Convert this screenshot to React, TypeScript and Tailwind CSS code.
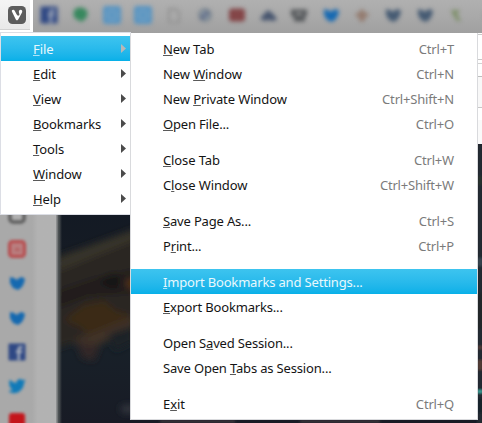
import React from "react";

type Item = { label: string; key: number; shortcut?: string; active?: boolean };

const mainItems: Item[] = [
  { label: "File", key: 0, active: true },
  { label: "Edit", key: 0 },
  { label: "View", key: 0 },
  { label: "Bookmarks", key: 0 },
  { label: "Tools", key: 0 },
  { label: "Window", key: 0 },
  { label: "Help", key: 0 },
];

const fileGroups: Item[][] = [
  [
    { label: "New Tab", key: 0, shortcut: "Ctrl+T" },
    { label: "New Window", key: 4, shortcut: "Ctrl+N" },
    { label: "New Private Window", key: 4, shortcut: "Ctrl+Shift+N" },
    { label: "Open File...", key: 0, shortcut: "Ctrl+O" },
  ],
  [
    { label: "Close Tab", key: 0, shortcut: "Ctrl+W" },
    { label: "Close Window", key: 1, shortcut: "Ctrl+Shift+W" },
  ],
  [
    { label: "Save Page As...", key: 0, shortcut: "Ctrl+S" },
    { label: "Print...", key: 1, shortcut: "Ctrl+P" },
  ],
  [
    { label: "Import Bookmarks and Settings...", key: 0, active: true },
    { label: "Export Bookmarks...", key: 0 },
  ],
  [
    { label: "Open Saved Session...", key: 6 },
    { label: "Save Open Tabs as Session...", key: 10 },
  ],
  [{ label: "Exit", key: 1, shortcut: "Ctrl+Q" }],
];

function Label({ label, index }: { label: string; index: number }) {
  return (
    <span className={`whitespace-pre ${label.endsWith("...") ? "tracking-[-0.17px]" : "tracking-[-0.11px]"}`}>
      {label.slice(0, index)}
      <span className="underline decoration-1 decoration-current/70 underline-offset-1 [text-decoration-skip-ink:none]">
        {label[index]}
      </span>
      {label.slice(index + 1)}
    </span>
  );
}

const activeRow = "bg-linear-to-b from-[#3dc4ef] to-[#06b0e8] text-[#e8f8fd]";

const BIRD =
  "M16 3.2c-.6.3-1.2.5-1.9.5.7-.4 1.2-1 1.4-1.8-.6.4-1.3.6-2 .8A3.3 3.3 0 0 0 7.800 5.700 9.400 9.400 0 0 1 1.100 2.300c-.9 1.500-.4 3.400 1 4.400-.5 0-1-.2-1.500-.4 0 1.600 1.100 3 2.700 3.300-.5.100-1 .100-1.500 0 .4 1.300 1.600 2.300 3.100 2.300A6.600 6.600 0 0 1 0 13.300c6.300 3.900 14.500-.4 14.500-8.500.6-.4 1.100-1 1.500-1.600z";

function Fb() {
  return (
    <g>
      <rect x="-.5" y="-.5" width="17" height="17" rx="1" fill="#2f4884" />
      <path d="M8.500 16V9H7V6.500h1.500V5c0-2 1-3 3-3h2v2.500H12q-1 0-1 1v1h2.500L13 9h-2v7z" fill="#a4abba" />
    </g>
  );
}

function Square({ fill }: { fill: string }) {
  return (
    <g>
      <rect x="-1" y="-1" width="18" height="18" rx="3" fill={fill} />
      <rect x="4" y="4" width="8" height="8" rx="2" fill="none" stroke="#9fb4c5" strokeWidth="1.500" opacity=".6" />
    </g>
  );
}

const Heart = ({ fill }: { fill: string }) => (
  <path d="M1 2l4 1 3 2 2-2 3-1 3 2-1 4-2 4-4 3-5-2-3-5z" fill={fill} />
);

const tabIcons: React.ReactNode[] = [
  <Fb />,
  <path d="M8 .5c4 0 7.500 2 7.500 6s-3 7-5 7v2l-3-2c-4-1-6-3-6-7s3-6 6.500-6z" fill="#37885e" />,
  <Square fill="#5794c2" />,
  <Square fill="#5794c2" />,
  <path d="M3 2h7l3 3v10H3z" fill="#a9a9a9" stroke="#8a8a8a" strokeWidth="1.500" />,
  <g>
    <circle cx="8" cy="8" r="5.500" fill="#929eaa" stroke="#74808c" strokeWidth="2.500" />
    <path d="M4 12l7-7" stroke="#54607f" strokeWidth="2.500" />
  </g>,
  <rect x="0" y="1.500" width="16" height="13" rx="3" fill="#844648" />,
  <path d="M0 12l3-4 5-5 4 3 3 3 2 4-5 1-3-1-4 1z" fill="#48566f" />,
  <path d="M0 2.500h16v6l-2 1v5H3V10L0 9zM5 6h6v2H5z" fill="#56595c" fillRule="evenodd" />,
  <Heart fill="#1669b2" />,
  <path d="M1 8l5-3 2-3 2 3 5 3-4 2-1 4H6l-1-4z" fill="#947c70" stroke="#947c70" />,
  <Heart fill="#465b73" />,
  <Heart fill="#465b73" />,
  <path d="M3 3h9l-3 4 4 7H9L5 8z" fill="#7e906a" />,
  <path d="M5 6h12v5H5z" fill="#858585" />,
];

const sideIcons: React.ReactNode[] = [
  <rect x="1" y="0" width="14" height="15" rx="3" fill="#b0b0b0" stroke="#5c5c5c" strokeWidth="3.500" />,
  <g>
    <rect x=".5" y=".5" width="15" height="15" rx="3" fill="#b97f80" stroke="#b74a4c" strokeWidth="3" />
    <path d="M5 10l3-4 4 4z" fill="#b35f60" />
  </g>,
  <Heart fill="#1569b0" />,
  <Heart fill="#1569b0" />,
  <Fb />,
  <path d={BIRD} fill="#107ab8" stroke="#107ab8" />,
  <rect x="0" y="1" width="16" height="15" rx="3" fill="#c4151b" />,
];

function Backdrop() {
  return (
    <svg className="block size-full" viewBox="58 144 424 279" preserveAspectRatio="none">
      <defs>
        <linearGradient id="night" x1="0" y1="0" x2="0" y2="1">
          <stop offset="0" stopColor="#101824" />
          <stop offset=".38" stopColor="#151b24" />
          <stop offset=".7" stopColor="#182129" />
          <stop offset="1" stopColor="#181b25" />
        </linearGradient>
        <filter id="soft" x="-20%" y="-20%" width="140%" height="140%">
          <feGaussianBlur stdDeviation="3.500" />
        </filter>
        <filter id="fine">
          <feGaussianBlur stdDeviation="1" />
        </filter>
      </defs>
      <rect x="58" y="144" width="424" height="279" fill="url(#night)" />
      <g filter="url(#soft)">
        <path d="M52 258l35-12 50-18v94l-85 28z" fill="#292724" />
        <path d="M58 259l34-13 45-17v10l-45 18-34 14z" fill="#37342c" />
        <path d="M60 290l35-12 42-9v24l-47 3-32 12z" fill="#221d1d" />
        <path d="M97 282l16-9 9 6-7 11z" fill="#171819" />
        <path d="M124 283l12-7v16z" fill="#553617" />
        <path d="M64 320l20-15 20-4 12 10 14 4-18 22-17 4-15-14z" fill="#3b2a16" />
        <path d="M72 341l62-25v10l-35 19-17 3z" fill="#413227" />
        <path d="M76 342l24 5-6 14-12-3z" fill="#302725" />
        <path d="M108 334l25-8v16l-18 9z" fill="#1b2326" />
        <ellipse cx="128" cy="409" rx="8" ry="4" fill="#353841" />
      </g>
      <g filter="url(#fine)">
        <path d="M477 144h6v280h-6z" fill="#202a33" />
        <path d="M477 176h6v9h-6z" fill="#28332e" />
        <path d="M477 258h6v8h-6z" fill="#35434d" />
        <path d="M477 293h6v36h-6z" fill="#22252b" />
        <path d="M477 346h6v3h-6zM477 360h6v10h-6z" fill="#513b36" />
        <path d="M477 390h6v3h-6z" fill="#3b9c96" />
        <path d="M478 398h5v15h-5z" fill="#18222c" />
        <path d="M160 420h75v3h-75zM300 420h80v3h-80z" fill="#393239" />
      </g>
    </svg>
  );
}

function MainMenu() {
  return (
    <div className="absolute top-8 left-0 h-[183px] w-[131px] border border-[#dcdee5] bg-white pt-[3px]">
      {mainItems.map((it) => (
        <div
          key={it.label}
          className={`flex h-[25px] items-center justify-between pr-1 pl-8 ${it.active ? activeRow : ""}`}
        >
          <Label label={it.label} index={it.key} />
          <svg
            width="5"
            height="9"
            viewBox="0 0 5 9"
            className={it.active ? "fill-[#b7b7b7]" : "fill-[#4b4b4b]"}
          >
            <path d="M0 0l5 4.500-5 4.500z" />
          </svg>
        </div>
      ))}
    </div>
  );
}

function FileMenu() {
  return (
    <div className="absolute top-[33px] left-[130px] flex h-[387px] w-[348px] flex-col gap-[11px] border border-t-0 border-[#d9dadd] bg-white pt-[3px]">
      {fileGroups.map((group, g) => (
        <div key={g}>
          {group.map((it) => (
            <div
              key={it.label}
              className={`flex h-[25px] items-center justify-between pr-[23px] pl-8 ${it.active ? activeRow : ""}`}
            >
              <Label label={it.label} index={it.key} />
              {it.shortcut && <span className="tracking-[-0.18px] text-[#7b7b7b]">{it.shortcut}</span>}
            </div>
          ))}
        </div>
      ))}
    </div>
  );
}

export default function App() {
  return (
    <div className="relative flex h-[423px] w-[482px] flex-col overflow-hidden bg-[#b1b1b1] font-['Noto_Sans',sans-serif] text-[13px] leading-[18px] text-[#141414]">
      <div className="flex h-[33px] shrink-0">
        <div className="h-[33px] w-[33px] shrink-0 bg-white">
          <div className="h-[30px] w-[30px] border-b border-[#d2d2d2] bg-linear-to-b from-[#f4f4f4] to-[#e9e9e9] pt-1.5 pl-2">
            <svg width="18" height="18" viewBox="0 0 18 18">
              <rect width="18" height="18" rx="4.500" fill="#5d5d5d" />
              <path
                d="M4 5.700c-.5-1 .1-1.900 1.200-1.900.7 0 1.100.3 1.500 1l2 3.800c.5 1 1.100 1.300 1.900 1 .7-.3 1-.9.8-1.700l-.4-1.200c-.5-1.500.2-2.900 1.500-2.900 1.500 0 2.200 1.300 1.500 2.700L10.200 13.600c-.6 1.100-1.800 1.100-2.400 0z"
                fill="#fff"
              />
            </svg>
          </div>
        </div>
        <div className="flex grow items-start gap-[15.300px] overflow-hidden bg-linear-to-b from-[#b0b0b0] via-[#a9a9a9] to-[#a0a0a0] pt-[7px] pl-2">
          {tabIcons.map((icon, i) => (
            <svg key={i} width="16" height="16" viewBox="0 0 16 16" className="shrink-0 overflow-visible blur-[2px]">
              {icon}
            </svg>
          ))}
        </div>
      </div>
      <div className="flex min-h-0 grow">
        <div className="flex w-[58px] shrink-0 flex-col gap-[18.200px] bg-linear-to-r from-[#a9a9a9] from-55% to-[#b2b2b2] to-65% pt-[174px] pl-[9px]">
          {sideIcons.map((icon, i) => (
            <svg key={i} width="16" height="16" viewBox="0 0 16 16" className="shrink-0 overflow-visible blur-[1.8px]">
              {icon}
            </svg>
          ))}
        </div>
        <div className="flex grow flex-col">
          <div className="flex h-[111px] shrink-0 flex-col bg-white pt-px">
            <div className="h-[26px] border-y border-[#c9c9c9]" />
            <div className="mt-[3px] h-3.5 border-y border-t-[#d2d2d2] border-b-[#bdbdbd] bg-white" />
            <div className="h-[31px] border-b border-[#c8c8c8] bg-[#f8f8f8]" />
            <div className="h-3 bg-white" />
            <div className="grow bg-[#fafafa]" />
          </div>
          <div className="relative min-h-0 grow">
            <Backdrop />
            <div className="absolute inset-y-0 -left-0.5 w-1.5 bg-linear-to-r from-[#8a8c8d]/60 via-[#4a4f51] to-transparent" />
          </div>
        </div>
      </div>
      <MainMenu />
      <FileMenu />
    </div>
  );
}
